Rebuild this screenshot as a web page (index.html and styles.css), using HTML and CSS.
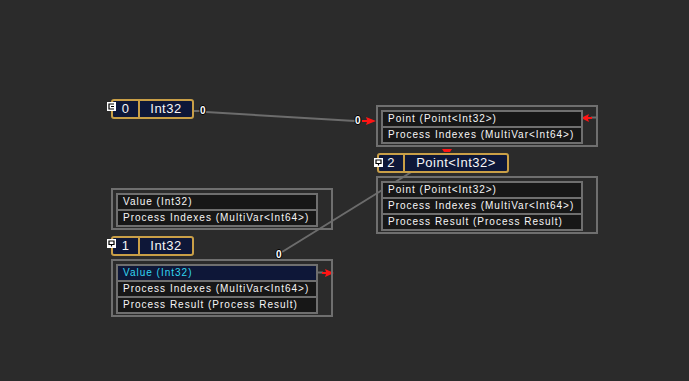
FILE: index.html
```html
<!DOCTYPE html>
<html lang="en">
<head>
    <meta charset="UTF-8">
    <title>Node graph</title>
<link rel="stylesheet" href="styles.css">
</head>
<body>
    <div class="canvas">
        <!-- wires -->
        <svg class="wires" width="689" height="381" viewBox="0 0 689 381">
            <line x1="193" y1="111" x2="200" y2="111" class="wire"/>
            <line x1="206" y1="112" x2="355" y2="121" class="wire"/>
            <line x1="413" y1="171" x2="282" y2="252" class="wire"/>
            <line x1="591" y1="117.5" x2="597" y2="117.5" class="wire"/>
            <line x1="317" y1="272.5" x2="323" y2="272.5" class="wire"/>
            <polygon class="arrow" points="362,120 367,120 366,117 376,121 366,125 367,122 362,122"/>
            <polygon class="arrow" points="322,272 326,272 325,269 334,273 325,277 326,274 322,274"/>
            <polygon class="arrow" points="592,117 588,117 589,114 581,118 589,122 588,119 592,119"/>
            <polygon class="arrow" points="442,149 452,149 450,152 444,152"/>
        </svg>

        <span class="pin pin-a">0</span>
        <span class="pin pin-b">0</span>
        <span class="pin pin-c">0</span>

        <!-- node 0 -->
        <div class="head head-0">
            <svg class="toggle" width="9" height="9" viewBox="0 0 9 9"><rect width="9" height="9" fill="#fff"/><path d="M7 2H2V7H7M4 4.5H7" stroke="#000" fill="none" stroke-width="1.2"/></svg>
            <span class="idx">0</span>
            <span class="type">Int32</span>
        </div>

        <!-- point node -->
        <div class="body body-point">
            <div class="rows">
                <div class="row">Point (Point&lt;Int32&gt;)</div>
                <div class="row">Process Indexes (MultiVar&lt;Int64&gt;)</div>
            </div>
        </div>

        <!-- node 2 -->
        <div class="head head-2">
            <svg class="toggle" width="9" height="9" viewBox="0 0 9 9"><rect width="9" height="9" fill="#fff"/><path d="M2 2H7V5.5H2ZM4.5 5.5V7.5" stroke="#000" fill="none" stroke-width="1.2"/></svg>
            <span class="idx">2</span>
            <span class="type">Point&lt;Int32&gt;</span>
        </div>
        <div class="body body-2">
            <div class="rows">
                <div class="row">Point (Point&lt;Int32&gt;)</div>
                <div class="row">Process Indexes (MultiVar&lt;Int64&gt;)</div>
                <div class="row">Process Result (Process Result)</div>
            </div>
        </div>

        <!-- value node -->
        <div class="body body-value">
            <div class="rows">
                <div class="row">Value (Int32)</div>
                <div class="row">Process Indexes (MultiVar&lt;Int64&gt;)</div>
            </div>
        </div>

        <!-- node 1 -->
        <div class="head head-1">
            <svg class="toggle" width="9" height="9" viewBox="0 0 9 9"><rect width="9" height="9" fill="#fff"/><path d="M2 2H7V5.5H2ZM4.5 5.5V7.5" stroke="#000" fill="none" stroke-width="1.2"/></svg>
            <span class="idx">1</span>
            <span class="type">Int32</span>
        </div>
        <div class="body body-1">
            <div class="rows">
                <div class="row active">Value (Int32)</div>
                <div class="row">Process Indexes (MultiVar&lt;Int64&gt;)</div>
                <div class="row">Process Result (Process Result)</div>
            </div>
        </div>
    </div>
</body>
</html>
```

FILE: styles.css
```css
:root {
    --bg: #2b2b2b;
    --gold: #c99f47;
    --navy: #0e1738;
    --grey: #6f6f6f;
    --row-bg: #171717;
    --cyan: #32d6f2;
}

* {
    margin: 0;
    padding: 0;
    box-sizing: border-box;
}

body {
    background-color: var(--bg);
    font-family: 'Liberation Sans', Arial, sans-serif;
    color: #f6f6f6;
}

.canvas {
    position: relative;
    width: 689px;
    height: 381px;
    overflow: hidden;
}

.wires { position: absolute; left: 0; top: 0; }
.wire { stroke: #6c6c6c; stroke-width: 2; }
.arrow { fill: #ff1414; }

/* little connection labels */
.pin {
    position: absolute;
    font-size: 10px;
    font-weight: bold;
    line-height: 10px;
    color: #fff;
    text-shadow: 1px 0 #000, -1px 0 #000, 0 1px #000, 0 -1px #000;
}
.pin-a { left: 200px; top: 106px; }
.pin-b { left: 355px; top: 116px; }
.pin-c { left: 276px; top: 250px; }

/* node header (index + type) */
.head {
    position: absolute;
    display: flex;
    height: 20px;
    border: 2px solid var(--gold);
    border-radius: 3px;
    background-color: var(--navy);
    font-size: 13px;
    line-height: 16px;
    letter-spacing: 0.5px;
}
.head .idx { width: 27px; text-align: center; border-right: 2px solid var(--gold); }
.head .type { flex: 1; text-align: center; }
.head .toggle { position: absolute; left: -6px; top: 1px; }

.head-0 { left: 111px; top: 99px; width: 83px; }
.head-1 { left: 111px; top: 236px; width: 83px; }
.head-2 { left: 377px; top: 153px; width: 132px; }
.head-2 .idx { width: 26px; }
.head-2 .toggle { top: 3px; left: -5px; }

/* node body with port rows */
.body {
    position: absolute;
    width: 222px;
    border: 2px solid var(--grey);
    padding: 3px 0 1px 3px;
}
.rows {
    width: 202px;
    display: flex;
    flex-direction: column;
    gap: 2px;
    padding: 2px;
    background-color: var(--grey);
}
.row {
    height: 14px;
    line-height: 14px;
    padding-left: 5px;
    background-color: var(--row-bg);
    font-size: 10px;
    letter-spacing: 1px;
    white-space: nowrap;
}
.row.active { background-color: var(--navy); color: var(--cyan); }

.body-point { left: 376px; top: 105px; }
.body-2 { left: 376px; top: 176px; }
.body-value { left: 111px; top: 188px; }
.body-1 { left: 111px; top: 259px; }
```
